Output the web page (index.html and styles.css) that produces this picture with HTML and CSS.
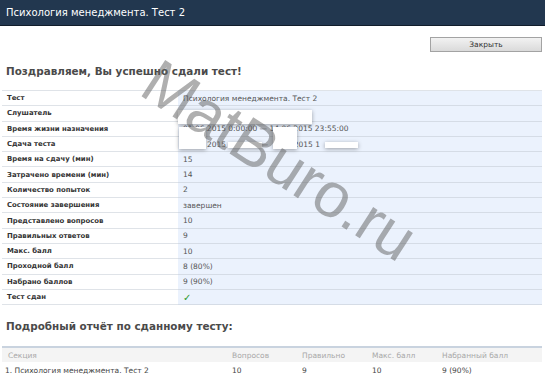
FILE: index.html
```html
<!DOCTYPE html>
<html lang="ru">
<head>
    <meta charset="UTF-8">
    <title>Психология менеджмента. Тест 2</title>
    <link rel="stylesheet" href="styles.css">
</head>
<body>
  <div class="topbar">Психология менеджмента. Тест 2</div>

  <div class="toolbar">
    <button class="btn">Закрыть</button>
  </div>

  <h2 class="title">Поздравляем, Вы успешно сдали тест!</h2>

  <table class="summary">
    <tr><th>Тест</th><td>Психология менеджмента. Тест 2</td></tr>
    <tr><th>Слушатель</th><td><span class="hide hide-name"></span></td></tr>
    <tr>
      <th>Время жизни назначения</th>
      <td>01.06.2015 0:00:00 — 14.06.2015 23:55:00<span class="hide hide-day"></span><span class="hide hide-day2"></span></td>
    </tr>
    <tr>
      <th>Сдача теста</th>
      <td><span class="gap"></span>2015 <span class="gap-time"></span> — <span class="gap2"></span>2015 1<span class="hide hide-time"></span><span class="hide hide-time2"></span></td>
    </tr>
    <tr><th>Время на сдачу (мин)</th><td>15</td></tr>
    <tr><th>Затрачено времени (мин)</th><td>14</td></tr>
    <tr><th>Количество попыток</th><td>2</td></tr>
    <tr><th>Состояние завершения</th><td>завершен</td></tr>
    <tr><th>Представлено вопросов</th><td>10</td></tr>
    <tr><th>Правильных ответов</th><td>9</td></tr>
    <tr><th>Макс. балл</th><td>10</td></tr>
    <tr><th>Проходной балл</th><td>8 (80%)</td></tr>
    <tr><th>Набрано баллов</th><td>9 (90%)</td></tr>
    <tr><th>Тест сдан</th><td><span class="check">✓</span></td></tr>
  </table>

  <h2 class="title report">Подробный отчёт по сданному тесту:</h2>

  <table class="details">
    <tr>
      <th class="c-sec">Секция</th>
      <th class="c-q">Вопросов</th>
      <th class="c-r">Правильно</th>
      <th class="c-m">Макс. балл</th>
      <th class="c-s">Набранный балл</th>
    </tr>
    <tr>
      <td>1. Психология менеджмента. Тест 2</td>
      <td>10</td>
      <td>9</td>
      <td>10</td>
      <td>9 (90%)</td>
    </tr>
  </table>

  <div class="watermark">MatBuro.ru</div>
</body>
</html>
```

FILE: styles.css
```css
body {
  margin: 0;
  background: #fff;
  font-family: "DejaVu Sans", Verdana, sans-serif;
  color: #444;
  position: relative;
  overflow: hidden;
  height: 375px;
}

.topbar {
  height: 25px;
  line-height: 25px;
  background-color: #22374f;
  border-bottom: 1px solid #111d2b;
  color: #fff;
  font-size: 10px;
  padding-left: 6px;
}

.toolbar {
  display: flex;
  justify-content: flex-end;
  padding: 11px 3px 0 0;
}

.btn {
  width: 112px;
  height: 15px;
  padding: 0;
  font-family: "DejaVu Sans", Verdana, sans-serif;
  font-size: 7.5px;
  color: #333;
  border: 1px solid #a3a3a3;
  border-radius: 0;
  background: linear-gradient(#f2f2f2, #dadada);
  cursor: pointer;
}

.title {
  margin: 13px 0 0 6px;
  font-size: 10.4px;
  font-weight: bold;
  color: #4a4a4a;
}

.summary {
  margin: 13px 3px 0 2px;
  width: calc(100% - 5px);
  border-collapse: collapse;
  font-size: 7.5px;
  border-top: 1px solid #dfe3e8;
}

.summary th,
.summary td {
  height: 14.3px;
  padding: 0 0 0 5px;
  border-bottom: 1px solid #dfe3e8;
  text-align: left;
  white-space: nowrap;
}

.summary th {
  width: 171px;
  color: #333;
  font-size: 6.9px;
  font-weight: bold;
}

.summary td {
  position: relative;
  background-color: #ebf2fd;
  color: #555;
  border-bottom-color: #d5dce6;
}

/* white boxes that hide personal data */
.hide {
  position: absolute;
  background: #fff;
  box-shadow: 0 1px 4px rgba(0, 0, 0, 0.35);
  z-index: 1;
}

.hide-name {
  left: 0;
  top: 4px;
  width: 134px;
  height: 14px;
}

.hide-day {
  left: 1px;
  top: 5px;
  width: 27px;
  height: 22px;
}

.hide-day2 {
  left: 95px;
  top: 5px;
  width: 24px;
  height: 22px;
}

.hide-time {
  left: 50px;
  top: 5px;
  width: 34px;
  height: 6px;
}

.hide-time2 {
  left: 147px;
  top: 5px;
  width: 33px;
  height: 6px;
}

.gap {
  display: inline-block;
  width: 24px;
}

.gap-time {
  display: inline-block;
  width: 30px;
}

.gap2 {
  display: inline-block;
  width: 23px;
}

.check {
  color: #2c9a2c;
  font-size: 10px;
  font-weight: bold;
}

.title.report {
  margin-top: 15px;
}

.details {
  margin: 14px 3px 0 2px;
  width: calc(100% - 5px);
  border-collapse: collapse;
  font-size: 7.5px;
}

.details th {
  height: 14px;
  padding: 0;
  background-color: #f4f4f4;
  border-top: 2px solid #c9d3df;
  color: #a8a8a8;
  font-weight: normal;
  text-align: left;
}

.details td {
  height: 16px;
  padding: 0;
  color: #444;
}

.details .c-sec {
  width: 224px;
}

.details th.c-sec {
  padding-left: 6px;
}

.details tr td:first-child {
  padding-left: 3px;
}

.details .c-q,
.details .c-r,
.details .c-m {
  width: 70px;
}

.watermark {
  position: absolute;
  left: 124px;
  top: 124px;
  font-family: "Liberation Sans", Arial, sans-serif;
  font-size: 63px;
  color: rgba(95, 95, 95, 0.5);
  transform: rotate(33deg);
  transform-origin: center;
  white-space: nowrap;
  pointer-events: none;
  z-index: 2;
}
```
